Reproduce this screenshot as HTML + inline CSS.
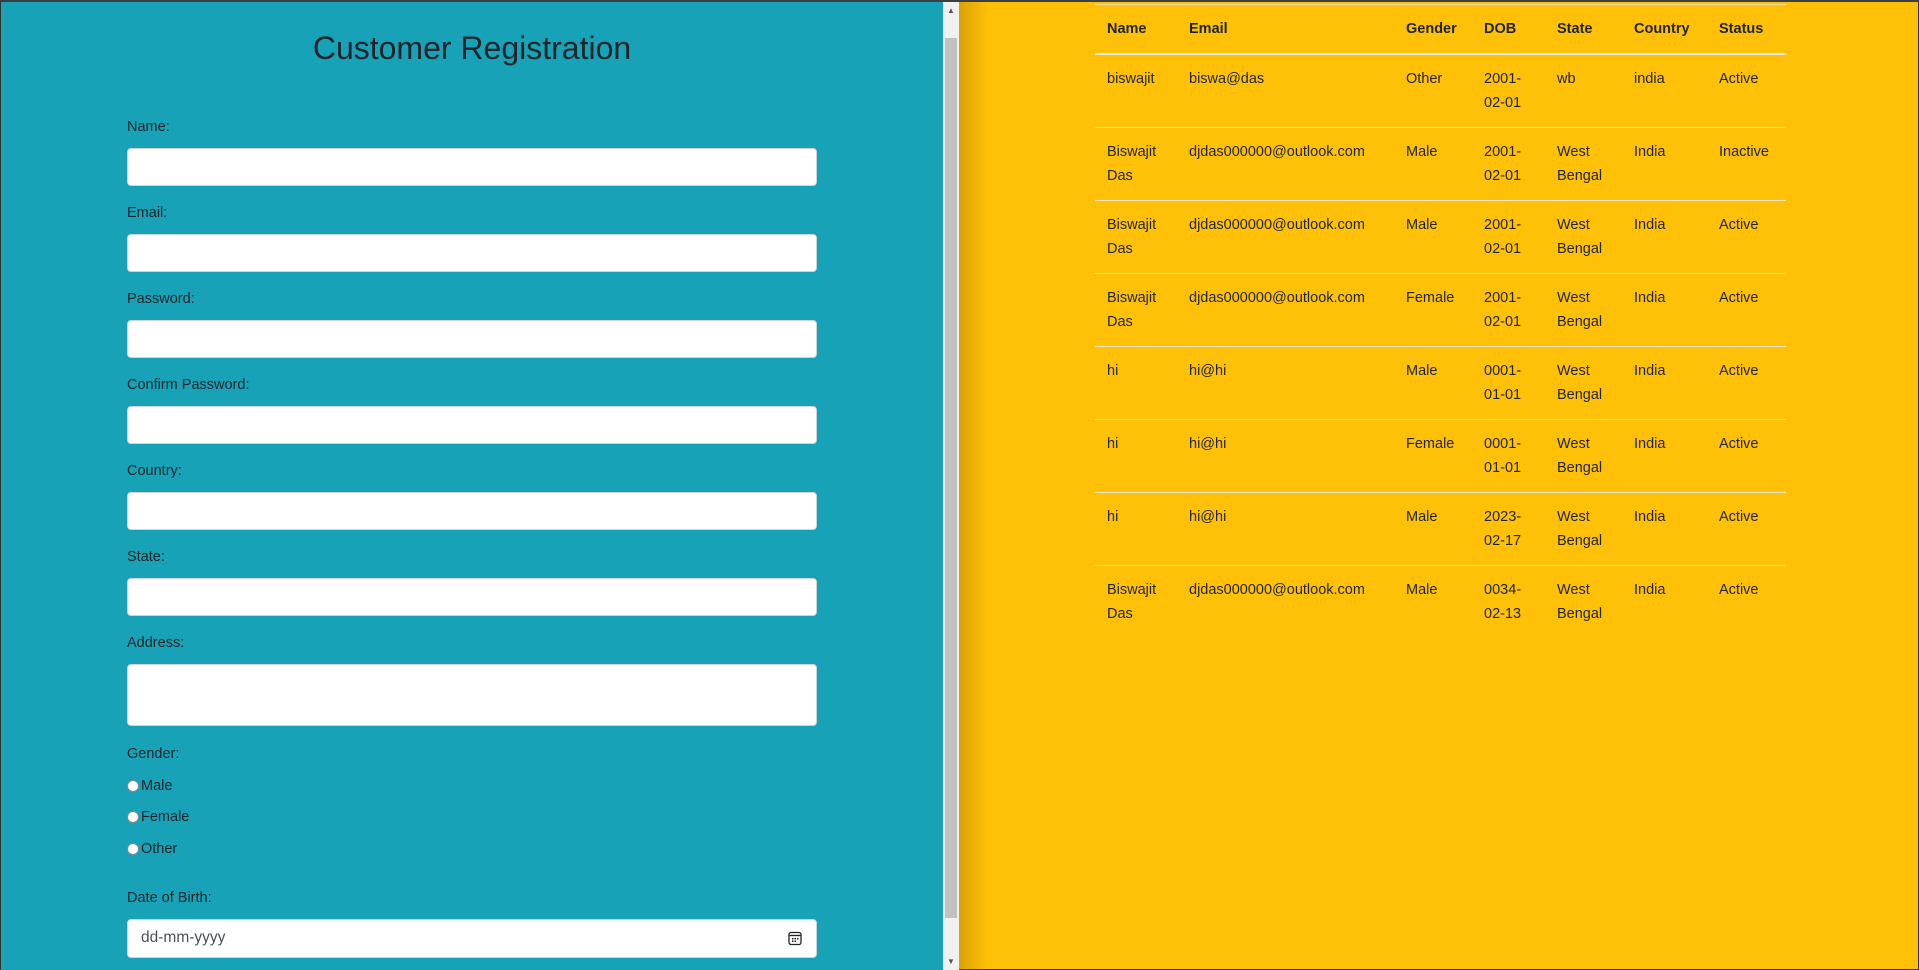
<!DOCTYPE html>
<html><head><meta charset="utf-8"><style>
*{box-sizing:border-box;margin:0;padding:0}
html,body{width:1919px;height:970px;overflow:hidden;font-family:"Liberation Sans",sans-serif;color:#212529;font-size:16px}
#frame{position:absolute;left:0;top:0;width:1919px;height:970px;border:1px solid #333;border-top:2px solid #3a3f44;background:#ffc107}
#left{position:absolute;left:0;top:0;width:942px;height:968px;background:#17a2b8}
#sb{position:absolute;left:942px;top:0;width:16px;height:968px;background:#f1f1f1}
#thumb{position:absolute;left:2px;top:36px;width:12px;height:880px;background:#c1c1c1}
.ar{position:absolute;left:4px;font-size:8px;color:#555}
#shadow{position:absolute;left:958px;top:0;width:30px;height:968px;background:linear-gradient(to right,rgba(150,100,0,.35),rgba(150,100,0,0))}
h1{position:absolute;left:0;width:942px;top:28px;text-align:center;font-size:32px;font-weight:500;color:#212529}
.lb{position:absolute;left:126px;font-size:14.5px}
.in{position:absolute;left:126px;width:690px;height:38px;background:#fff;border:1px solid #ced4da;border-radius:4px}
.rd{position:absolute;left:126px;font-size:14.5px;display:flex;align-items:center;height:18px}
.rd i{display:inline-block;width:12px;height:12px;border-radius:50%;background:#fff;border:1px solid #888;margin-right:2px}
table{position:absolute;left:1094px;top:2px;border-collapse:collapse;table-layout:fixed;width:691px;border-top:1px solid #f3e0a0}
td,th{padding:12px 0 12px 12px;text-align:left;vertical-align:top;font-size:14.5px;line-height:24px}
th{font-weight:bold;border-bottom:2px solid #e8e8e8;height:49px;padding-top:12px}
td{border-bottom:1px solid #f0e6c8;height:73px}
tr:last-child td{border-bottom:none}
</style></head><body>
<div id="frame">
<div id="left">
<h1>Customer Registration</h1>
<div class="lb" style="top:117px">Name:</div><div class="in" style="top:146px"></div>
<div class="lb" style="top:203px">Email:</div><div class="in" style="top:232px"></div>
<div class="lb" style="top:289px">Password:</div><div class="in" style="top:318px"></div>
<div class="lb" style="top:375px">Confirm Password:</div><div class="in" style="top:404px"></div>
<div class="lb" style="top:461px">Country:</div><div class="in" style="top:490px"></div>
<div class="lb" style="top:547px">State:</div><div class="in" style="top:576px"></div>
<div class="lb" style="top:633px">Address:</div><div class="in" style="top:662px;height:62px"></div>
<div class="lb" style="top:744px">Gender:</div>
<div class="rd" style="top:775px"><i></i>Male</div>
<div class="rd" style="top:806px"><i></i>Female</div>
<div class="rd" style="top:838px"><i></i>Other</div>
<div class="lb" style="top:888px">Date of Birth:</div>
<div class="in" style="top:917px;height:39px;padding:9px 13px;color:#495057;font-size:15.5px">dd-mm-yyyy
<svg style="position:absolute;right:14px;top:11px" width="14" height="15" viewBox="0 0 14 15"><rect x="1" y="1.5" width="12" height="12" rx="2" fill="none" stroke="#222" stroke-width="1.3"/><line x1="1" y1="4.5" x2="13" y2="4.5" stroke="#222" stroke-width="1.3"/><rect x="4" y="7" width="1.5" height="1.5" fill="#222"/><rect x="6.5" y="7" width="1.5" height="1.5" fill="#222"/><rect x="9" y="7" width="1.5" height="1.5" fill="#222"/><rect x="4" y="9.5" width="1.5" height="1.5" fill="#222"/><rect x="6.5" y="9.5" width="1.5" height="1.5" fill="#222"/></svg></div>
</div>
<div id="sb"><div class="ar" style="top:4px">▲</div><div id="thumb"></div><div class="ar" style="top:955px">▼</div></div>
<div id="shadow"></div>
<table>
<colgroup><col style="width:82px"><col style="width:217px"><col style="width:78px"><col style="width:73px"><col style="width:77px"><col style="width:85px"><col style="width:79px"></colgroup>
<tr><th>Name</th><th>Email</th><th>Gender</th><th>DOB</th><th>State</th><th>Country</th><th>Status</th></tr>
<tr><td>biswajit</td><td>biswa@das</td><td>Other</td><td>2001-<br>02-01</td><td>wb</td><td>india</td><td>Active</td></tr>
<tr><td>Biswajit Das</td><td>djdas000000@outlook.com</td><td>Male</td><td>2001-<br>02-01</td><td>West Bengal</td><td>India</td><td>Inactive</td></tr>
<tr><td>Biswajit Das</td><td>djdas000000@outlook.com</td><td>Male</td><td>2001-<br>02-01</td><td>West Bengal</td><td>India</td><td>Active</td></tr>
<tr><td>Biswajit Das</td><td>djdas000000@outlook.com</td><td>Female</td><td>2001-<br>02-01</td><td>West Bengal</td><td>India</td><td>Active</td></tr>
<tr><td>hi</td><td>hi@hi</td><td>Male</td><td>0001-<br>01-01</td><td>West Bengal</td><td>India</td><td>Active</td></tr>
<tr><td>hi</td><td>hi@hi</td><td>Female</td><td>0001-<br>01-01</td><td>West Bengal</td><td>India</td><td>Active</td></tr>
<tr><td>hi</td><td>hi@hi</td><td>Male</td><td>2023-<br>02-17</td><td>West Bengal</td><td>India</td><td>Active</td></tr>
<tr><td>Biswajit Das</td><td>djdas000000@outlook.com</td><td>Male</td><td>0034-<br>02-13</td><td>West Bengal</td><td>India</td><td>Active</td></tr>
</table>
</div>
</body></html>
